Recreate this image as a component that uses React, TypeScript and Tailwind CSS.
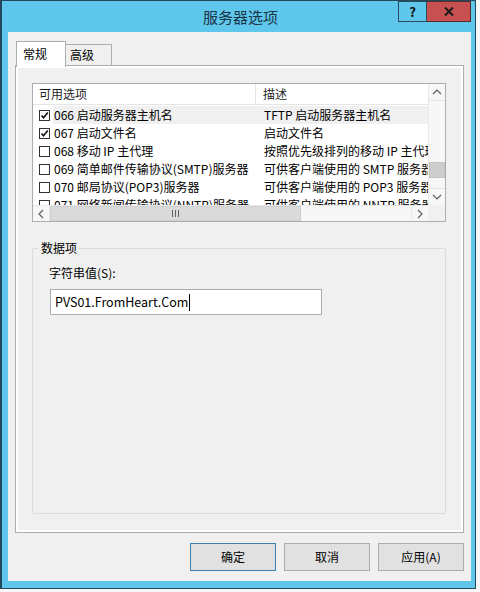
const cjk = { fontFamily: '"Noto Sans CJK SC", "Noto Sans", sans-serif' }

const rows = [
  { name: '066 启动服务器主机名', desc: 'TFTP 启动服务器主机名', checked: true, selected: true },
  { name: '067 启动文件名', desc: '启动文件名', checked: true },
  { name: '068 移动 IP 主代理', desc: '按照优先级排列的移动 IP 主代理' },
  { name: '069 简单邮件传输协议(SMTP)服务器', desc: '可供客户端使用的 SMTP 服务器' },
  { name: '070 邮局协议(POP3)服务器', desc: '可供客户端使用的 POP3 服务器' },
  { name: '071 网络新闻传输协议(NNTP)服务器', desc: '可供客户端使用的 NNTP 服务器' },
]

function Chevron({ dir }: { dir: 'up' | 'down' | 'left' | 'right' }) {
  const pts = {
    up: '1,6 5,2 9,6',
    down: '1,2 5,6 9,2',
    left: '6,1 2,5 6,9',
    right: '2,1 6,5 2,9',
  }[dir]
  const vertical = dir === 'up' || dir === 'down'
  return (
    <svg width={vertical ? 10 : 8} height={vertical ? 8 : 10} viewBox={vertical ? '0 0 10 8' : '0 0 8 10'}>
      <polyline points={pts} fill="none" stroke="#606060" strokeWidth="1.2" />
    </svg>
  )
}

function Checkbox({ checked }: { checked?: boolean }) {
  return (
    <div className="w-[11px] h-[11px] border border-[#333333] bg-white flex items-center justify-center shrink-0">
      {checked && (
        <svg width="9" height="9" viewBox="0 0 9 9">
          <polyline points="1.5,4.5 3.5,6.8 7.8,1.5" fill="none" stroke="#111" strokeWidth="1.6" />
        </svg>
      )}
    </div>
  )
}

function ListView() {
  return (
    <div className="w-[414px] h-[139px] border border-[#abadb3] bg-white flex flex-col">
      <div className="flex h-[121px]">
        <div className="w-[395px] flex flex-col overflow-hidden">
          <div className="h-[21px] shrink-0 flex border-b border-[#e5e5e5] text-[12px] text-[#1e1e1e]">
            <div className="w-[223px] pl-[6px] border-r border-[#e5e5e5] flex items-center">可用选项</div>
            <div className="pl-[7px] flex items-center">描述</div>
          </div>
          <div className="flex flex-col pt-[1px] overflow-hidden">
            {rows.map((r) => (
              <div key={r.name} className="h-[18px] shrink-0 flex items-center text-[12px] text-black whitespace-nowrap">
                <div className="w-[223px] flex items-center h-full overflow-hidden">
                  <div className="pl-[6px] pr-[3px] h-full flex items-center">
                    <Checkbox checked={r.checked} />
                  </div>
                  <div className={`h-full flex-1 flex items-center pl-[1px] ${r.selected ? 'bg-[#f0f0f0]' : ''}`}>{r.name}</div>
                </div>
                <div className={`h-full flex-1 flex items-center pl-[8px] overflow-hidden ${r.selected ? 'bg-[#f0f0f0]' : ''}`}>{r.desc}</div>
              </div>
            ))}
          </div>
        </div>
        {/* vertical scrollbar */}
        <div className="w-[17px] bg-[#f7f7f7] border-l border-[#e8e8e8] flex flex-col">
          <div className="h-[17px] flex items-center justify-center border-b border-[#e8e8e8]">
            <Chevron dir="up" />
          </div>
          <div className="flex-1 flex flex-col">
            <div className="h-[61px]" />
            <div className="h-[16px] bg-[#cdcdcd] border border-[#c4c4c4]" />
          </div>
          <div className="h-[17px] flex items-center justify-center border-t border-[#e8e8e8]">
            <Chevron dir="down" />
          </div>
        </div>
      </div>
      {/* horizontal scrollbar */}
      <div className="flex h-[16px]">
        <div className="w-[395px] flex bg-[#f7f7f7] border-t border-[#e8e8e8]">
          <div className="w-[17px] flex items-center justify-center border-r border-[#e8e8e8]">
            <Chevron dir="left" />
          </div>
          <div className="w-[251px] bg-[#dadada] border border-[#cfcfcf] flex items-center justify-center gap-[2px]">
            <div className="w-[1px] h-[7px] bg-[#606060]" />
            <div className="w-[1px] h-[7px] bg-[#606060]" />
            <div className="w-[1px] h-[7px] bg-[#606060]" />
          </div>
          <div className="flex-1" />
          <div className="w-[17px] flex items-center justify-center border-l border-[#e8e8e8]">
            <Chevron dir="right" />
          </div>
        </div>
        <div className="w-[17px] bg-[#f0f0f0]" />
      </div>
    </div>
  )
}

function DialogButton({ label, primary }: { label: string; primary?: boolean }) {
  return (
    <button
      className={`w-[86px] h-[28px] bg-[#e1e1e1] border text-[12px] text-black flex items-center justify-center ${
        primary ? 'border-[#3c7fb1]' : 'border-[#adadad]'
      }`}
    >
      {label}
    </button>
  )
}

export default function App() {
  return (
    <div className="w-[480px] h-[592px] bg-[#f7f7f7] overflow-hidden" style={cjk}>
      <div className="w-[476px] h-[589px] bg-[#5fc7ec] border border-[#23485c] border-l-2 flex flex-col">
        {/* title bar */}
        <div className="h-[31px] relative flex items-center justify-center shrink-0">
          <span className="text-[15px] text-[#1b3445] pl-[4px] pt-[1px]">服务器选项</span>
          <div className="absolute top-0 right-[4px] flex h-[21px]">
            <div className="w-[29px] h-full border border-[#2a4b5e] flex items-center justify-center text-[13px] font-bold text-[#111]">
              ?
            </div>
            <div className="w-[44px] h-full bg-[#c75050] border border-l-0 border-[#5a2a2a] flex items-center justify-center">
              <svg width="10" height="9" viewBox="0 0 10 9">
                <path d="M1 0.5 L9 8.5 M9 0.5 L1 8.5" stroke="#1a1a1a" strokeWidth="2" />
              </svg>
            </div>
          </div>
        </div>

        {/* client area */}
        <div className="ml-[6px] mr-[4px] mb-[7px] flex-1 bg-[#f0f0f0] flex flex-col px-[7px] pt-[9px]">
          {/* tabs */}
          <div className="flex items-end h-[26px] pl-[1px] relative z-10 -mb-[2px]">
            <div className="w-[50px] h-[26px] bg-white border border-b-0 border-[#adadad] text-[12px] text-black pl-[6px] pt-[3px]">
              常规
            </div>
            <div className="w-[46px] h-[21px] mb-[2px] bg-[#f0f0f0] border border-l-0 border-b-0 border-[#adadad] text-[12px] text-black pl-[4px] pt-[1px]">
              高级
            </div>
          </div>

          {/* tab panel */}
          <div className="w-[449px] h-[468px] border border-[#adadad] bg-white p-[2px]">
            <div className="w-full h-full bg-[#f0f0f0] flex flex-col pl-[14px] pt-[15px]">
              <ListView />

              <div className="relative mt-[26px] w-[414px] h-[266px] border border-[#dcdcdc] rounded-[2px]">
                <div className="absolute -top-[10px] left-[6px] px-[2px] bg-[#f0f0f0] text-[12px] text-black">数据项</div>
                <div className="pl-[16px] pt-[15px] text-[12px] text-black">字符串值(S):</div>
                <div className="ml-[17px] mt-[7px] w-[272px] h-[26px] bg-white border border-[#abadb3] flex items-center pl-[4px] text-[12.5px] text-black">
                  <span>PVS01.FromHeart.Com</span>
                  <span className="w-[1px] h-[17px] bg-black ml-[1px]" />
                </div>
              </div>
            </div>
          </div>

          {/* buttons */}
          <div className="flex justify-end mt-[10px] gap-[8px] w-[449px]">
            <DialogButton label="确定" primary />
            <DialogButton label="取消" />
            <DialogButton label="应用(A)" />
          </div>
        </div>
      </div>
    </div>
  )
}
